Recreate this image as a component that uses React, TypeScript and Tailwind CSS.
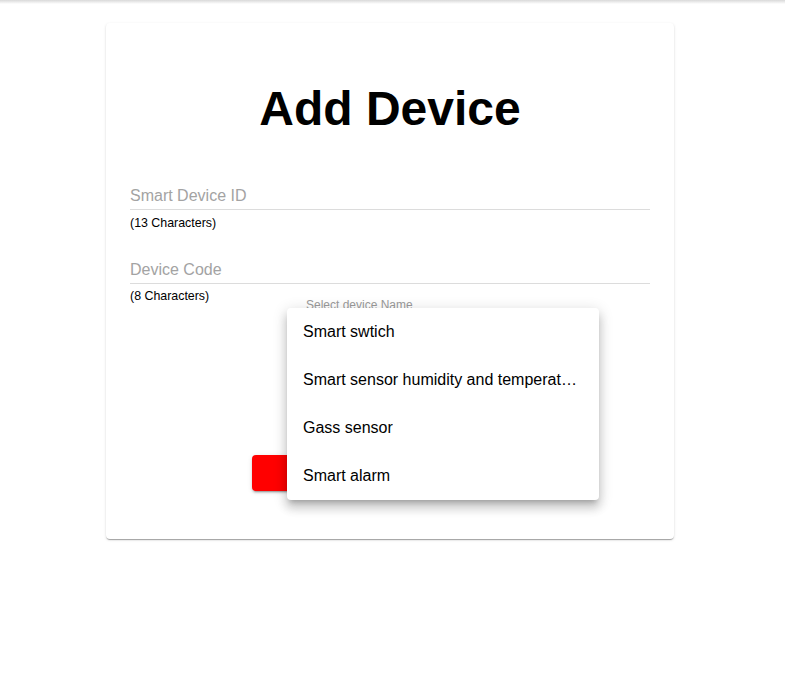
import React from "react";

const items = [
  "Smart swtich",
  "Smart sensor humidity and temperature sensor",
  "Gass sensor",
  "Smart alarm",
];

export default function App() {
  return (
    <div
      className="relative min-h-[682px] w-full bg-white text-black"
      style={{ fontFamily: '"Liberation Sans", Arial, sans-serif' }}
    >
      <div className="h-[4px] w-full bg-gradient-to-b from-[#d9d9d9] to-white" />
      <div className="pl-[106px] pt-[19px]">
        <div className="w-[568px] rounded-[4px] bg-white px-[24px] pt-[58px] pb-[48px] shadow-[0_2px_1px_-1px_rgba(0,0,0,0.2),0_1px_1px_0_rgba(0,0,0,0.14),0_1px_3px_0_rgba(0,0,0,0.12)]">
          <h1 className="text-center text-[48px] font-bold leading-[56px]">Add Device</h1>

          <div className="mt-[49px]">
            <div className="border-b border-[#dcdcdc] pb-[3px]">
              <input
                className="block h-[20px] w-full bg-transparent text-[16px] leading-[20px] outline-none placeholder:text-[#a3a3a3]"
                placeholder="Smart Device ID"
              />
            </div>
            <div className="mt-[6px] text-[12.4px] leading-[14px]">(13 Characters)</div>
          </div>

          <div className="mt-[30px]">
            <div className="border-b border-[#dcdcdc] pb-[3px]">
              <input
                className="block h-[20px] w-full bg-transparent text-[16px] leading-[20px] outline-none placeholder:text-[#a3a3a3]"
                placeholder="Device Code"
              />
            </div>
            <div className="mt-[5px] text-[12.4px] leading-[14px]">(8 Characters)</div>
          </div>

          <div className="-mt-[5px] ml-[176px] w-[288px]">
            <div className="text-[12px] leading-[14px] text-[#9a9a9a]">Select device Name</div>
            <div className="mt-[3px] h-[32px] border-b border-[#949494]" />
          </div>

          <div className="mt-[108px] flex justify-center">
            <button className="h-[36px] w-[276px] rounded-[4px] bg-[#ff0000] text-[14px] font-bold uppercase text-white shadow-[0_3px_1px_-2px_rgba(0,0,0,0.2),0_2px_2px_0_rgba(0,0,0,0.14),0_1px_5px_0_rgba(0,0,0,0.12)]">
              Add
            </button>
          </div>
        </div>
      </div>

      <div className="absolute left-[287px] top-[308px] w-[312px] overflow-hidden rounded-[4px] bg-white shadow-[0_5px_5px_-3px_rgba(0,0,0,0.2),0_8px_10px_1px_rgba(0,0,0,0.14),0_3px_14px_2px_rgba(0,0,0,0.12)]">
        {items.map((t) => (
          <div key={t} className="flex h-[48px] items-center px-[16px]">
            <span className="block truncate text-[16px] leading-[24px]">{t}</span>
          </div>
        ))}
      </div>
    </div>
  );
}
